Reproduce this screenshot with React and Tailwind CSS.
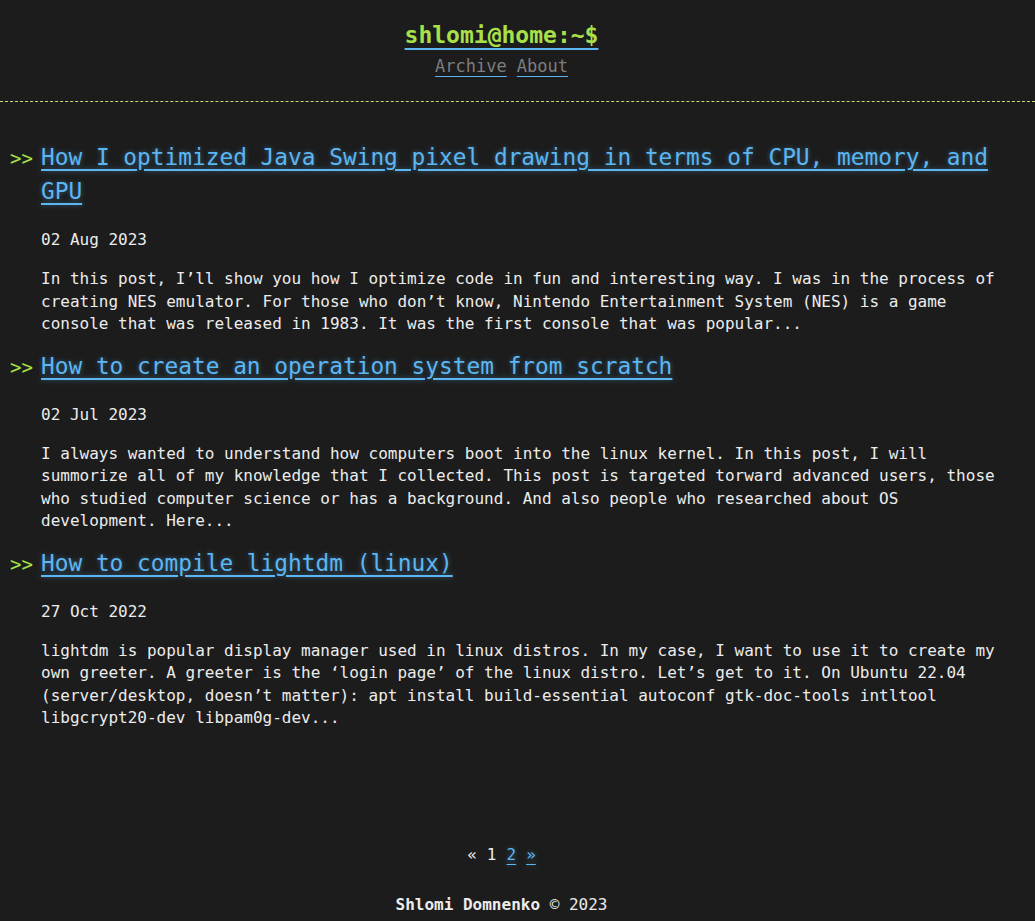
import React from "react";

const posts = [
  {
    title: "How I optimized Java Swing pixel drawing in terms of CPU, memory, and GPU",
    date: "02 Aug 2023",
    excerpt:
      "In this post, I’ll show you how I optimize code in fun and interesting way. I was in the process of creating NES emulator. For those who don’t know, Nintendo Entertainment System (NES) is a game console that was released in 1983. It was the first console that was popular...",
  },
  {
    title: "How to create an operation system from scratch",
    date: "02 Jul 2023",
    excerpt:
      "I always wanted to understand how computers boot into the linux kernel. In this post, I will summorize all of my knowledge that I collected. This post is targeted torward advanced users, those who studied computer science or has a background. And also people who researched about OS development. Here...",
  },
  {
    title: "How to compile lightdm (linux)",
    date: "27 Oct 2022",
    excerpt:
      "lightdm is popular display manager used in linux distros. In my case, I want to use it to create my own greeter. A greeter is the ‘login page’ of the linux distro. Let’s get to it. On Ubuntu 22.04 (server/desktop, doesn’t matter): apt install build-essential autoconf gtk-doc-tools intltool libgcrypt20-dev libpam0g-dev...",
  },
];

const link =
  "text-[#5cb6f2] underline decoration-[#5cb6f2] underline-offset-[4px] [text-shadow:0_0_5px_rgba(92,182,242,0.45)]";

function Header() {
  return (
    <header className="pt-[21px] pb-[24px] pr-8 text-center border-b border-dashed border-[#c2df6e]">
      <h1 className="text-[23px] leading-[28px] font-bold">
        <a href="#" className="text-[#a8e04a] underline decoration-[#5cb6f2] decoration-2 underline-offset-[5px]">
          shlomi@home:~$
        </a>
      </h1>
      <nav className="mt-[6px] text-[17px] leading-[22px] space-x-[10px]">
        <a href="#" className="text-[#7e7e7e] underline decoration-[#5cb6f2] underline-offset-[4px]">Archive</a>
        <a href="#" className="text-[#7e7e7e] underline decoration-[#5cb6f2] underline-offset-[4px]">About</a>
      </nav>
    </header>
  );
}

function Post({ p }) {
  return (
    <article>
      <h2 className="relative text-[22.8px] leading-[34px] font-normal">
        <span className="absolute left-[-31px] top-[1px] text-[19px] text-[#a8e04a]">&gt;&gt;</span>
        <a href="#" className={link}>{p.title}</a>
      </h2>
      <p className="mt-[21px] leading-[22.4px]">{p.date}</p>
      <p className="mt-[17px] leading-[22.4px]">{p.excerpt}</p>
    </article>
  );
}

export default function App() {
  return (
    <div className="min-h-screen bg-[#1c1c1c] text-[#ececec] text-[16px] font-['DejaVu_Sans_Mono',monospace]">
      <Header />
      <main className="pt-[38px] pl-[41px] pr-[35px] flex flex-col gap-[13px]">
        {posts.map((p) => (
          <Post key={p.date} p={p} />
        ))}
      </main>
      <div className="mt-[114px] pr-8 text-center leading-[22px] space-x-[10px]">
        <span>«</span>
        <span>1</span>
        <a href="#" className={link}>2</a>
        <a href="#" className={link}>»</a>
      </div>
      <footer className="mt-[28px] pr-8 text-center leading-[22px] pb-2">
        <b>Shlomi Domnenko</b> © 2023
      </footer>
    </div>
  );
}
